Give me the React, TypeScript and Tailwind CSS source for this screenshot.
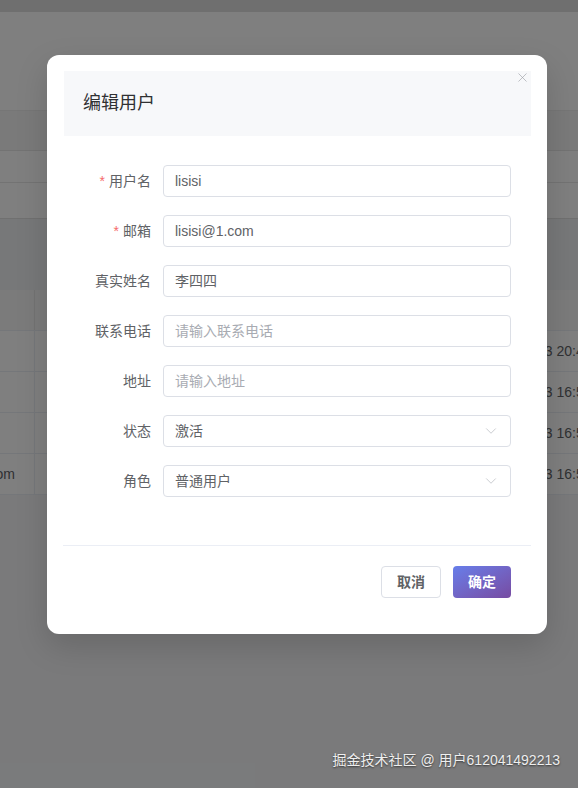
import { ChevronDown, X } from "lucide-react";

const font = "font-['Liberation_Sans','Noto_Sans_CJK_SC',sans-serif]";

type Field = {
  label: string;
  required?: boolean;
  value?: string;
  placeholder?: string;
  select?: boolean;
};

const fields: Field[] = [
  { label: "用户名", required: true, value: "lisisi" },
  { label: "邮箱", required: true, value: "lisisi@1.com" },
  { label: "真实姓名", value: "李四四" },
  { label: "联系电话", placeholder: "请输入联系电话" },
  { label: "地址", placeholder: "请输入地址" },
  { label: "状态", value: "激活", select: true },
  { label: "角色", value: "普通用户", select: true },
];

const rows = [
  { left: "", right: "2023-08-03 20:45" },
  { left: "", right: "2023-08-03 16:52" },
  { left: "", right: "2023-08-03 16:53" },
  { left: "lisisi@1.com", right: "2023-08-03 16:55" },
];

function BackgroundPage() {
  return (
    <div className="flex h-full flex-col bg-[#f4f5f7]">
      <div className="h-[12px] bg-[#dedede]" />
      <div className="h-[98px] bg-white" />
      <div className="h-[40px] border-t border-[#ececec] bg-[#f5f5f5]" />
      <div className="h-[32px] border-t border-[#e6e6e6] bg-white" />
      <div className="h-[36px] border-t border-[#e6e6e6] bg-white" />
      <div className="h-[72px] border-t border-[#e0e0e0] bg-[#eef0f3]" />
      <div className="flex h-[40px] bg-[#f7f7f7]">
        <div className="w-[35px] border-r border-[#e6e6e6]" />
      </div>
      {rows.map((r, i) => (
        <div
          key={i}
          className="flex h-[41px] items-center justify-between border-t border-[#ebeef5] bg-white text-[14px] text-[#606266]"
        >
          <div className="flex h-full w-[35px] items-center justify-end overflow-hidden border-r border-[#ebeef5]">
            <span className="whitespace-nowrap pr-[19px]">{r.left}</span>
          </div>
          <div className="flex w-[31px] justify-start overflow-hidden">
            <span className="ml-[-66px] whitespace-nowrap">{r.right}</span>
          </div>
        </div>
      ))}
      <div className="border-t border-[#ebeef5]" />
    </div>
  );
}

function FormRow({ f }: { f: Field }) {
  return (
    <div className="flex h-[32px] items-center">
      <label className="w-[87px] text-right text-[14px] text-[#606266]">
        {f.required && <span className="mr-[4px] text-[#f56c6c]">*</span>}
        {f.label}
      </label>
      <div className="ml-[12px] flex h-[32px] w-[348px] items-center justify-between rounded-[4px] border border-[#dcdfe6] bg-white pl-[11px] pr-[10px] text-[14px]">
        {f.value ? (
          <span className="text-[#606266]">{f.value}</span>
        ) : (
          <span className="text-[#a8abb2]">{f.placeholder}</span>
        )}
        {f.select && (
          <ChevronDown className="h-[18px] w-[18px] text-[#b8bbc0]" strokeWidth={1} />
        )}
      </div>
    </div>
  );
}

export default function App() {
  return (
    <div className={`relative h-[788px] w-full overflow-hidden ${font}`}>
      <BackgroundPage />

      <div className="absolute inset-0 bg-black/50">
        <div className="pl-[47px] pt-[55px]">
          <div className="relative h-[579px] w-[500px] rounded-[12px] bg-white px-[16px] pt-[16px] shadow-[0_12px_32px_rgba(0,0,0,0.15)]">
            <button className="absolute right-[17px] top-[15px] text-[#9a9da3]">
              <X className="h-[15px] w-[15px]" strokeWidth={1} />
            </button>

            <div className="ml-[1px] flex h-[65px] items-center bg-[#f7f8fa] px-[19px] text-[18px] text-[#303133]">
              编辑用户
            </div>

            <div className="ml-[1px] mt-[29px] flex flex-col gap-[18px]">
              {fields.map((f) => (
                <FormRow key={f.label} f={f} />
              ))}
            </div>

            <div className="mt-[48px] border-t border-[#ebeef5]" />

            <div className="mr-[20px] mt-[20px] flex justify-end gap-[12px]">
              <button className="h-[32px] w-[60px] rounded-[4px] border border-[#dcdfe6] bg-white text-[14px] font-bold text-[#606266]">
                取消
              </button>
              <button className="h-[32px] w-[58px] rounded-[4px] bg-gradient-to-br from-[#667eea] to-[#764ba2] text-[14px] font-bold text-white">
                确定
              </button>
            </div>
          </div>
        </div>

        <div className="absolute bottom-[17px] right-[18px] text-[14px] text-white/90 [text-shadow:0_1px_2px_rgba(0,0,0,0.6)]">
          掘金技术社区 @ 用户612041492213
        </div>
      </div>
    </div>
  );
}
